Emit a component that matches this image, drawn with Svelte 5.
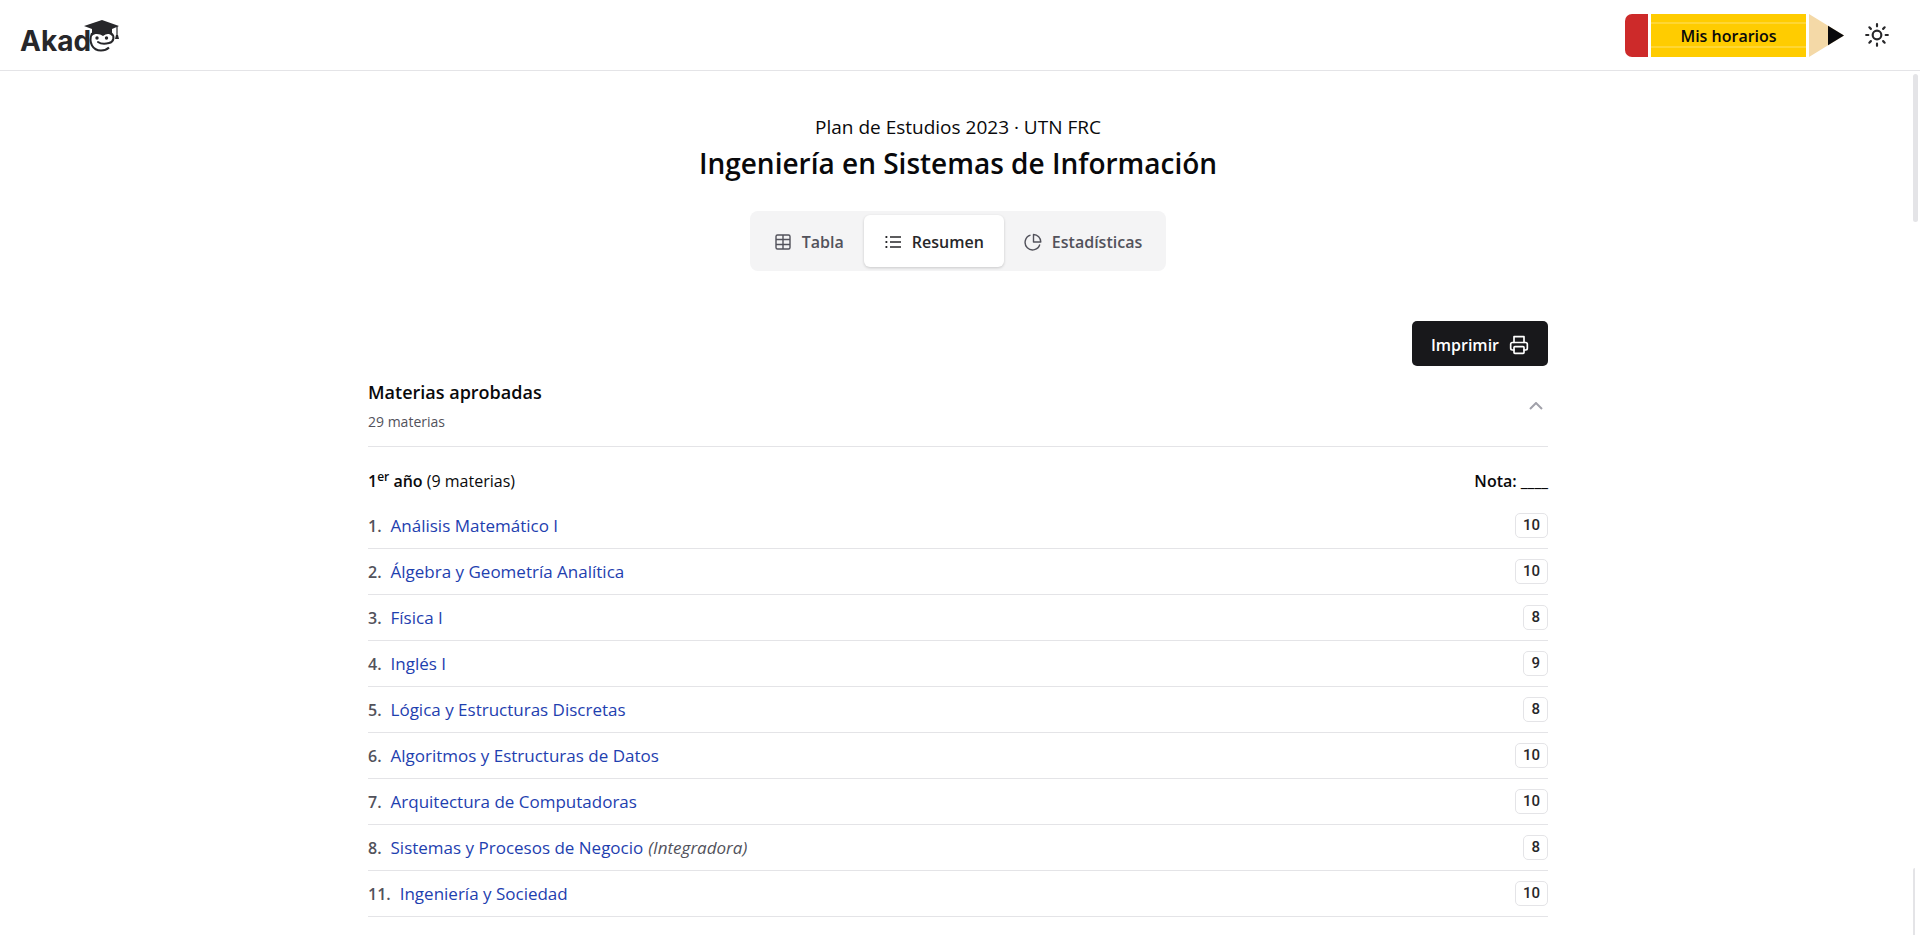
<script lang="ts">
	type Subject = { number: number; name: string; grade: number; note?: string };

	const subjects: Subject[] = [
		{ number: 1, name: 'Análisis Matemático I', grade: 10 },
		{ number: 2, name: 'Álgebra y Geometría Analítica', grade: 10 },
		{ number: 3, name: 'Física I', grade: 8 },
		{ number: 4, name: 'Inglés I', grade: 9 },
		{ number: 5, name: 'Lógica y Estructuras Discretas', grade: 8 },
		{ number: 6, name: 'Algoritmos y Estructuras de Datos', grade: 10 },
		{ number: 7, name: 'Arquitectura de Computadoras', grade: 10 },
		{ number: 8, name: 'Sistemas y Procesos de Negocio', grade: 8, note: '(Integradora)' },
		{ number: 11, name: 'Ingeniería y Sociedad', grade: 10 }
	];

	let tab = $state('resumen');
	let open = $state(true);
</script>

<div class="app">
	<header>
		<a class="logo" href="/" aria-label="Akado">
			<span>Akad</span>
			<svg width="38" height="34" viewBox="0 0 38 34" fill="none" aria-hidden="true">
				<path d="M10 15C6 25 11 32.500 19 32.500c3.500 0 6-1 8-3" stroke="#27272a" stroke-width="2" />
				<path d="M29 15c4 3 3 9-2 10-4 1-8 1-11-1" stroke="#27272a" stroke-width="2" stroke-linecap="round" />
				<circle cx="15" cy="20" r="1.700" fill="#27272a" />
				<circle cx="24.500" cy="20" r="1.700" fill="#27272a" />
				<path d="M2 8 20 2l17 6-7 3v7c-3-3-6-2-9 0-3-2-8-3-11 0v-7Z" fill="#27272a" />
				<path d="M35 8v10" stroke="#27272a" stroke-width="1.2" />
				<path d="M34 17h2l1 4h-4Z" fill="#27272a" />
			</svg>
		</a>
		<div class="actions">
			<a class="pencil" href="/horarios">
				<span class="eraser"></span>
				<span class="pencil-body">Mis horarios</span>
				<svg width="35" height="43" viewBox="0 0 35 43" aria-hidden="true">
					<path d="M0 0 35 21.500 0 43Z" fill="#f4d9a7" />
					<path d="M19 11.700 35 21.500 19 31.300Z" fill="#09090b" />
				</svg>
			</a>
			<button class="theme" aria-label="Cambiar tema">
				<svg width="26" height="26" viewBox="0 0 24 24" fill="none" stroke="currentColor" stroke-width="2" stroke-linecap="round">
					<circle cx="12" cy="12" r="4" />
					<path d="M12 2v2M12 20v2M4.930 4.930l1.410 1.410M17.660 17.660l1.410 1.410M2 12h2M20 12h2M6.340 17.660l-1.410 1.410M19.070 4.930l-1.410 1.410" />
				</svg>
			</button>
		</div>
	</header>

	<main>
		<p class="plan">Plan de Estudios 2023 · UTN FRC</p>
		<h1>Ingeniería en Sistemas de Información</h1>

		<div class="tabs" role="tablist">
			<button role="tab" aria-selected={tab === 'tabla'} class:active={tab === 'tabla'} onclick={() => (tab = 'tabla')}>
				<svg width="18" height="18" viewBox="0 0 18 18" fill="none" stroke="currentColor" stroke-width="1.4">
					<rect x="2" y="2" width="14" height="14" rx="1.500" />
					<path d="M2 6.500h14M2 11.500h14M9 2v14" />
				</svg>
				Tabla
			</button>
			<button role="tab" aria-selected={tab === 'resumen'} class:active={tab === 'resumen'} onclick={() => (tab = 'resumen')}>
				<svg width="18" height="18" viewBox="0 0 18 18" fill="none" stroke="currentColor" stroke-width="1.4">
					<path d="M6 4H17M6 9H17M6 14H17" />
					<path d="M1.500 4h1.800M1.500 9h1.800M1.500 14h1.800" stroke-width="1.800" />
				</svg>
				Resumen
			</button>
			<button role="tab" aria-selected={tab === 'estadisticas'} class:active={tab === 'estadisticas'} onclick={() => (tab = 'estadisticas')}>
				<svg width="18" height="18" viewBox="0 0 18 18" fill="none" stroke="currentColor" stroke-width="1.4" stroke-linejoin="round">
					<path d="M6.500 2.200A7.500 7.500 0 1 0 15.800 11.500" />
					<path d="M9.500 1.500V9H16.800A7.500 7.500 0 0 0 9.500 1.500Z" />
				</svg>
				Estadísticas
			</button>
		</div>

		<div class="content">
			<button class="print" onclick={() => window.print()}>
				Imprimir
				<svg width="20" height="20" viewBox="0 0 24 24" fill="none" stroke="currentColor" stroke-width="2" stroke-linecap="round" stroke-linejoin="round">
					<path d="M6 9V2h12v7" />
					<path d="M6 18H4a2 2 0 0 1-2-2v-5a2 2 0 0 1 2-2h16a2 2 0 0 1 2 2v5a2 2 0 0 1-2 2h-2" />
					<rect x="6" y="14" width="12" height="8" rx="1" />
				</svg>
			</button>

			<section>
				<button class="section-head" aria-expanded={open} onclick={() => (open = !open)}>
					<span>
						<span class="section-title">Materias aprobadas</span>
						<span class="section-count">29 materias</span>
					</span>
					<svg class:closed={!open} width="14" height="8" viewBox="0 0 14 8" fill="none" stroke="#a1a1aa" stroke-width="2">
						<path d="M1 7l6-6 6 6" />
					</svg>
				</button>

				{#if open}
					<div class="year">
						<p><strong>1<sup>er</sup> año</strong> (9 materias)</p>
						<strong>Nota: ____</strong>
					</div>
					<ul>
						{#each subjects as subject (subject.number)}
							<li>
								<span class="number">{subject.number}.</span>
								<a href="/materias/{subject.number}">{subject.name}</a>
								{#if subject.note}<em>{subject.note}</em>{/if}
								<span class="grade">{subject.grade}</span>
							</li>
						{/each}
					</ul>
				{/if}
			</section>
		</div>
		<span class="thumb"></span>
		<span class="thumb inner"></span>
	</main>
</div>

<style>
:global(body) {
	margin: 0;
	background: #fff;
}
.app {
	height: 100vh;
	display: flex;
	flex-direction: column;
	overflow: hidden;
	font-family: "Segoe UI", "Open Sans", "Noto Sans", sans-serif;
	font-size: 16px;
	line-height: 24px;
	color: #09090b;
}
button {
	font: inherit;
	color: inherit;
	border: 0;
	background: none;
	padding: 0;
	cursor: pointer;
}
a {
	text-decoration: none;
}
p, h1, ul {
	margin: 0;
	padding: 0;
}
strong {
	font-weight: 600;
}
header {
	flex: none;
	height: 70px;
	display: flex;
	align-items: center;
	justify-content: space-between;
	padding: 0 30px 0 20px;
	border-bottom: 1px solid #e4e4e7;
}
.logo {
	display: flex;
	align-items: center;
	font-family: Inter, sans-serif;
	font-size: 28px;
	font-weight: 700;
	line-height: 40px;
	color: #27272a;
	padding-top: 12px;
}
.logo svg {
	margin: -12px 0 0 -9px;
}
.actions {
	display: flex;
	align-items: center;
	gap: 20px;
}
.pencil {
	display: flex;
	gap: 3px;
	height: 43px;
	color: #09090b;
	font-weight: 600;
}
.eraser {
	width: 23px;
	border-radius: 7px 0 0 7px;
	background: #cd2a2a;
}
.pencil-body {
	box-sizing: border-box;
	width: 155px;
	display: flex;
	align-items: center;
	justify-content: center;
	padding-top: 2px;
	background: linear-gradient(#fc0 8px, #ffd633 8px 10px, #fc0 10px 32px, #ffd633 32px 34px, #fc0 34px);
}
.theme {
	display: flex;
	color: #27272a;
}
main {
	flex: 1;
	min-height: 0;
	position: relative;
	display: flex;
	flex-direction: column;
	align-items: center;
	padding: 42px 4px 0 0;
}
.plan {
	font-size: 19px;
	line-height: 28px;
}
h1 {
	margin-top: 2px;
	font-size: 28px;
	font-weight: 600;
	line-height: 40px;
}
.tabs {
	display: flex;
	margin-top: 28px;
	padding: 4px;
	border-radius: 8px;
	background: #f4f4f5;
	color: #52525b;
	font-weight: 600;
}
.tabs button {
	height: 52px;
	display: flex;
	align-items: center;
	gap: 10px;
	padding: 2px 20px 0;
	border-radius: 6px;
}
.tabs .active {
	background: #fff;
	color: #27272a;
	box-shadow: 0 1px 3px #0000002e;
}
.content {
	width: calc(100% - 40px);
	max-width: 1180px;
	margin-top: 50px;
	display: flex;
	flex-direction: column;
}
.print {
	align-self: flex-end;
	height: 45px;
	display: flex;
	align-items: center;
	gap: 10px;
	padding: 2px 19px 0;
	border-radius: 5px;
	background: #18181b;
	color: #fff;
	font-weight: 600;
}
.section-head {
	width: 100%;
	display: flex;
	align-items: center;
	justify-content: space-between;
	padding: 12px 5px 12px 0;
	border-bottom: 1px solid #e4e4e7;
	text-align: left;
}
.section-title,
.section-count {
	display: block;
}
.section-title {
	font-size: 18px;
	font-weight: 600;
	line-height: 28px;
}
.section-count {
	margin-top: 4px;
	font-size: 14px;
	color: #52525b;
}
.closed {
	transform: rotate(180deg);
}
.year {
	display: flex;
	justify-content: space-between;
	padding: 22px 0 10px;
}
sup {
	font-size: 12px;
	line-height: 0;
}
li {
	height: 45px;
	display: flex;
	align-items: center;
	border-bottom: 1px solid #e4e4e7;
}
.number {
	margin-right: 9px;
	font-weight: 600;
	color: #52525b;
}
li a,
em {
	font-size: 17px;
}
li a {
	color: #1e40af;
}
em {
	margin-left: 5px;
	color: #52525b;
}
.grade {
	margin-left: auto;
	padding: 0 7px;
	border: 1px solid #e4e4e7;
	border-radius: 5px;
	font-family: Roboto, sans-serif;
	font-size: 15px;
	font-weight: 500;
	line-height: 23px;
	color: #27272a;
}
/* scroll thumbs lie over the right edge of the page */
.thumb {
	position: absolute;
	top: 3px;
	right: 2px;
	width: 5px;
	height: 148px;
	border-radius: 3px;
	background: #e4e4e7;
}
.inner {
	top: auto;
	bottom: 0;
	right: 5px;
	width: 2px;
	height: 67px;
	border-radius: 2px 0 0 0;
}
</style>
